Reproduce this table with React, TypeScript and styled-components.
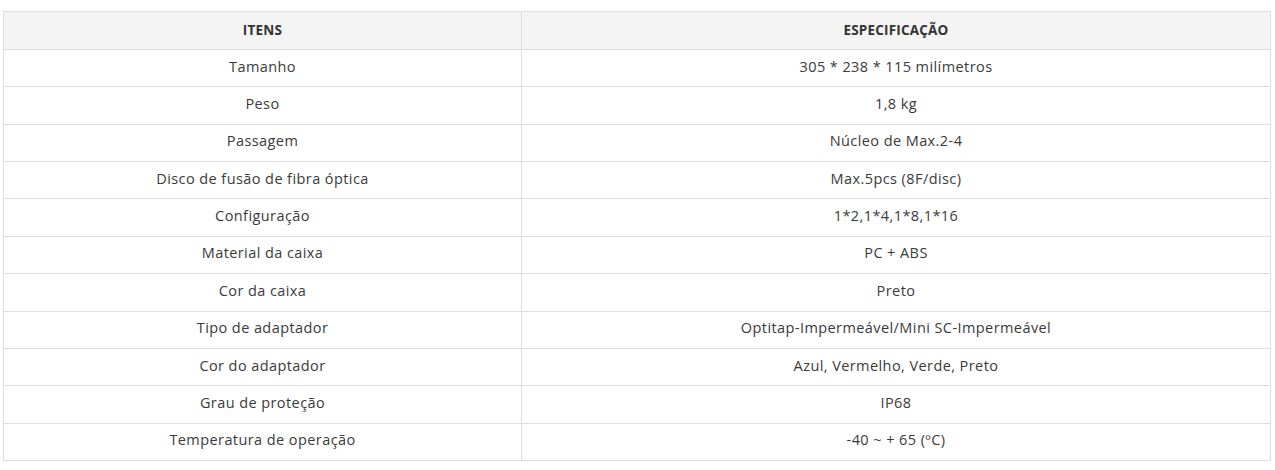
import React from "react";
import styled, { createGlobalStyle } from "styled-components";

const Global = createGlobalStyle`
  html, body { margin: 0; padding: 0; background: #ffffff; }
  body { font-family: "Open Sans", "Noto Sans", sans-serif; }
`;

const Wrapper = styled.div`
  padding: 11px 4px 0 3px;
`;

const Table = styled.table`
  width: 1268px;
  border-collapse: collapse;
  table-layout: fixed;
  color: #3a3a3a;
  font-size: 14.5px;
`;

const HeadCell = styled.th`
  height: 35px;
  padding: 0 8px 2px;
  background: #f4f4f4;
  border: 1px solid #dddddd;
  font-weight: 700;
  font-size: 13.5px;
  letter-spacing: 0.2px;
  line-height: 18px;
  color: #333333;
  text-align: center;
  text-transform: uppercase;
`;

const Cell = styled.td`
  height: 33.36px;
  padding: 0 8px 3px;
  border: 1px solid #dddddd;
  text-align: center;
  font-weight: 400;
  letter-spacing: 0.42px;
  line-height: 20px;
`;

const rows: [string, string][] = [
  ["Tamanho", "305 * 238 * 115 milímetros"],
  ["Peso", "1,8 kg"],
  ["Passagem", "Núcleo de Max.2-4"],
  ["Disco de fusão de fibra óptica", "Max.5pcs (8F/disc)"],
  ["Configuração", "1*2,1*4,1*8,1*16"],
  ["Material da caixa", "PC + ABS"],
  ["Cor da caixa", "Preto"],
  ["Tipo de adaptador", "Optitap-Impermeável/Mini SC-Impermeável"],
  ["Cor do adaptador", "Azul, Vermelho, Verde, Preto"],
  ["Grau de proteção", "IP68"],
  ["Temperatura de operação", "-40 ~ + 65 (ºC)"],
];

export default function App() {
  return (
    <Wrapper>
      <Global />
      <Table>
        <colgroup>
          <col style={{ width: 518 }} />
          <col />
        </colgroup>
        <thead>
          <tr>
            <HeadCell>Itens</HeadCell>
            <HeadCell>Especificação</HeadCell>
          </tr>
        </thead>
        <tbody>
          {rows.map(([k, v]) => (
            <tr key={k}>
              <Cell>{k}</Cell>
              <Cell>{v}</Cell>
            </tr>
          ))}
        </tbody>
      </Table>
    </Wrapper>
  );
}
